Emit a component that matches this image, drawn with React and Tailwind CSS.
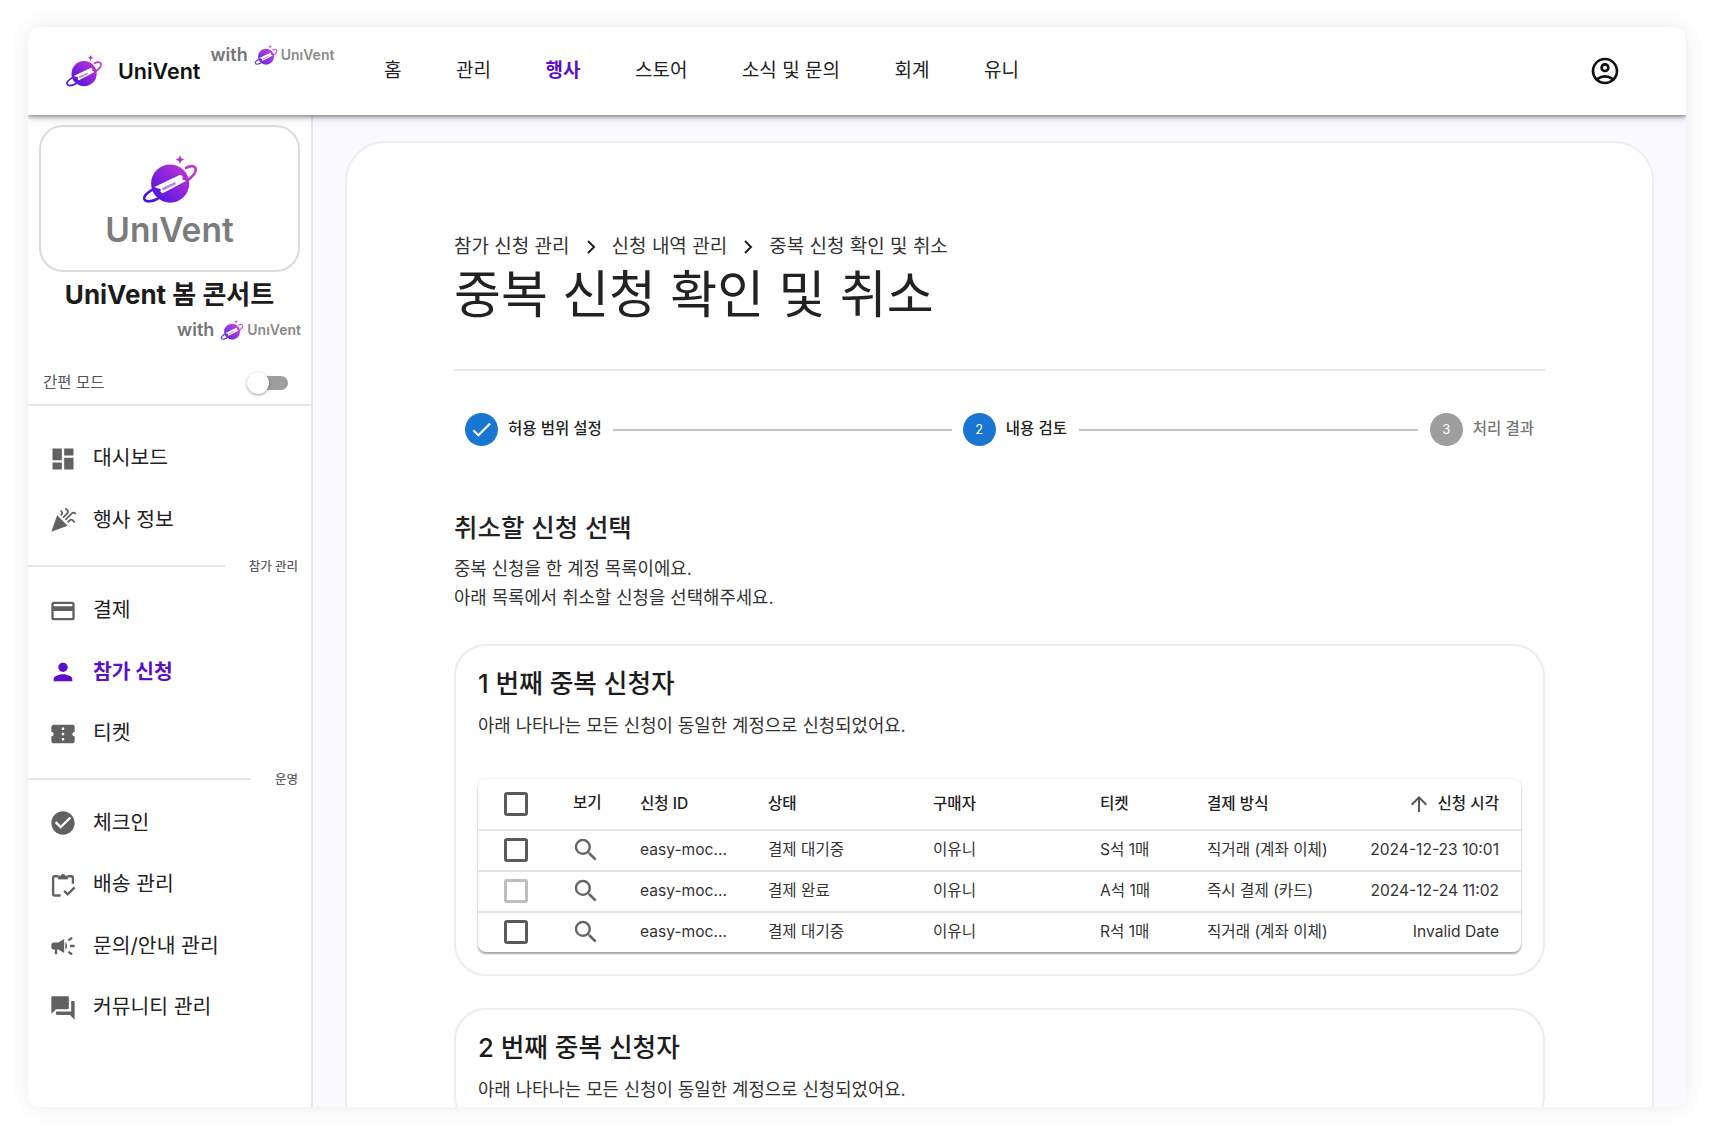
import React, { useId } from "react";
import {
  MdDashboard,
  MdCelebration,
  MdOutlineCreditCard,
  MdPerson,
  MdConfirmationNumber,
  MdCheckCircle,
  MdCampaign,
  MdForum,
  MdOutlineAccountCircle,
  MdSearch,
  MdArrowUpward,
  MdCheck,
} from "react-icons/md";

const topMenus = ["홈", "관리", "행사", "스토어", "소식 및 문의", "회계", "유니"];

const rows = [
  { status: "결제 대기중", ticket: "S석 1매", pay: "직거래 (계좌 이체)", time: "2024-12-23 10:01" },
  { status: "결제 완료", ticket: "A석 1매", pay: "즉시 결제 (카드)", time: "2024-12-24 11:02", disabled: true },
  { status: "결제 대기중", ticket: "R석 1매", pay: "직거래 (계좌 이체)", time: "Invalid Date" },
];

const columns = "grid grid-cols-[93px_69px_128px_165px_167px_107px_140px_1fr] items-center";

// planet + ticket logo
const Logo = ({ className }) => {
  const id = useId();
  return (
    <svg viewBox="30 10 175 155" className={className}>
      <defs>
        <linearGradient id={id} x1="175" y1="45" x2="65" y2="155" gradientUnits="userSpaceOnUse">
          <stop offset="0" stopColor="#c935d2" />
          <stop offset="1" stopColor="#4a12e2" />
        </linearGradient>
      </defs>
      <path d="M148 14l4 9 9 4-9 4-4 9-4-9-9-4 9-4z" fill="#b52fd8" />
      <circle cx="118" cy="100" r="58" fill={`url(#${id})`} />
      <path d="M166 52c16-9 30-6 30 6 0 12-14 24-28 34" fill="none" stroke={`url(#${id})`} strokeWidth="8" strokeLinecap="round" />
      <path d="M64 118c-18 11-28 22-24 30 5 9 22 7 40-2" fill="none" stroke={`url(#${id})`} strokeWidth="8" strokeLinecap="round" />
      <path d="M70 110L150 72l7 8c-4 5-1 10 5 9l4 3-72 38-6-6c4-6 0-11-6-9z" fill="#fff" />
      <path d="M92 114l40-19 5 6-40 20z" fill={`url(#${id})`} opacity="0.55" />
    </svg>
  );
};

const WithBadge = ({ className }) => (
  <div className={`flex items-center text-[#757575] ${className}`}>
    <span className="text-[18px] font-semibold leading-6">with</span>
    <Logo className="ml-[6px] w-[24px] h-[22px] opacity-90" />
    <span className="ml-[3px] text-[14px] font-semibold leading-6 text-[#8a8a8a]">UnıVent</span>
  </div>
);

const ClipboardCheck = ({ className }) => (
  <svg viewBox="0 0 24 24" fill="none" stroke="currentColor" strokeWidth="2" className={className}>
    <path d="M10 21H5a1.5 1.5 0 0 1-1.5-1.5V6A1.5 1.5 0 0 1 5 4.500h3" />
    <path d="M16 4.500h3A1.500 1.500 0 0 1 20.500 6v5" />
    <path d="M8 7V4.500h2a2 2 0 0 1 4 0h2V7z" fill="currentColor" stroke="none" />
    <path d="M8 4h8v3H8z" fill="currentColor" stroke="none" />
    <path d="M13 17l3 3 6-6" />
  </svg>
);

const NavItem = ({ icon: Icon, label, active }) => (
  <div className="flex items-center h-[61.5px] pl-[21px]">
    <Icon className={`w-[28px] h-[28px] shrink-0 ${active ? "text-[#5b0fc8]" : "text-[#616161]"}`} />
    <span className={`ml-[16px] text-[20.4px] ${active ? "font-bold text-[#5b0fc8]" : "text-[#212121]"}`}>{label}</span>
  </div>
);

const NavDivider = ({ label, height }) => (
  <div className={`flex items-center gap-[24px] pr-[13px] ${height}`}>
    <div className="flex-1 h-[2px] bg-[#e6e6e6]" />
    <span className="mt-[3px] text-[12.5px] font-medium text-[#616161]">{label}</span>
  </div>
);

const CheckBoxIcon = ({ disabled }) => (
  <span
    className={`block w-[24px] h-[24px] rounded-[3px] border-[3px] ${
      disabled ? "border-[#bdbdbd]" : "border-[#5a5a5a]"
    }`}
  />
);

const Step = ({ icon, label, color, textColor }) => (
  <div className="flex items-center shrink-0">
    <div className={`w-[33px] h-[33px] rounded-full flex items-center justify-center text-white text-[13px] ${color}`}>
      {icon}
    </div>
    <span className={`ml-[10px] -mt-[2px] text-[15.5px] font-medium ${textColor}`}>{label}</span>
  </div>
);

const DuplicateCard = ({ index, table }) => (
  <section className="border-2 border-[#ececf2] rounded-[32px] px-[22px] pt-[20px] pb-[22px] mb-[32px] bg-white">
    <h3 className="text-[25.7px] font-medium leading-[36px] text-[#1c1c1c]">{index} 번째 중복 신청자</h3>
    <p className="mt-[10px] text-[17.8px] leading-[28px] text-[#333]">
      아래 나타나는 모든 신청이 동일한 계정으로 신청되었어요.
    </p>
    {table && (
      <div className="mt-[39px] rounded-[8px] bg-white shadow-[0_2px_2px_rgba(0,0,0,0.35),0_0_3px_rgba(0,0,0,0.08)] text-[15.6px] text-[#333]">
        <div className={`${columns} h-[52px] border-b-2 border-[#e4e4e4] font-medium text-[#222]`}>
          <div className="pl-[26px]">
            <CheckBoxIcon />
          </div>
          <div className="-mt-[3px] pl-[2px]">보기</div>
          <div>신청 ID</div>
          <div>상태</div>
          <div>구매자</div>
          <div>티켓</div>
          <div>결제 방식</div>
          <div className="flex items-center justify-end pr-[22px]">
            <MdArrowUpward className="w-[24px] h-[24px] mr-[6px] text-[#555]" />
            신청 시각
          </div>
        </div>
        {rows.map((row, i) => (
          <div
            key={i}
            className={`${columns} pb-[2px] ${i < rows.length - 1 ? "h-[41px] border-b-2 border-[#e4e4e4]" : "h-[39px]"}`}
          >
            <div className="pl-[26px]">
              <CheckBoxIcon disabled={row.disabled} />
            </div>
            <MdSearch className="w-[30px] h-[30px] text-[#666]" />
            <div>easy-moc...</div>
            <div>{row.status}</div>
            <div>이유니</div>
            <div>{row.ticket}</div>
            <div>{row.pay}</div>
            <div className="text-right pr-[22px]">{row.time}</div>
          </div>
        ))}
      </div>
    )}
  </section>
);

export default function App() {
  return (
    <div className="h-[1134px] bg-white pl-[28px] pr-[27px] pt-[27px] pb-[27px] font-[Inter,'Noto_Sans_CJK_KR',sans-serif]">
      <div className="h-full flex flex-col rounded-[12px] overflow-hidden bg-white shadow-[0_0_22px_rgba(0,0,0,0.09)]">
        {/* top bar */}
        <header className="relative z-10 h-[88px] shrink-0 flex items-center bg-white shadow-[0_2px_4px_rgba(0,0,0,0.4),0_4px_10px_rgba(0,0,0,0.1)]">
          <div className="flex items-center pl-[37px] w-[356px] shrink-0">
            <Logo className="w-[38px] h-[34px] shrink-0" />
            <span className="ml-[15px] text-[21.5px] font-semibold text-[#111]">UniVent</span>
            <WithBadge className="ml-[10px] -mt-[33px]" />
          </div>
          <nav className="flex items-center text-[19px] text-[#222]">
            {topMenus.map((menu) => (
              <span
                key={menu}
                className={`mr-[54.5px] ${menu === "행사" ? "font-bold text-[#5b0fc8]" : ""}`}
              >
                {menu}
              </span>
            ))}
          </nav>
          <MdOutlineAccountCircle className="ml-auto mr-[65px] w-[32px] h-[32px] text-[#111]" />
        </header>

        <div className="flex flex-1 min-h-0">
          {/* sidebar */}
          <aside className="w-[285px] shrink-0 border-r-2 border-[#e6e6ea] bg-white">
            <div className="mx-[11px] mt-[10px] h-[147px] rounded-[24px] border-2 border-[#dcdcdc] flex flex-col items-center pt-[27px]">
              <Logo className="w-[58px] h-[51px]" />
              <span className="mt-[7px] text-[33.5px] leading-[36px] font-semibold text-[#7c7c7c]">UnıVent</span>
            </div>
            <h2 className="mt-[8px] text-center text-[26px] font-bold leading-[30px] text-[#1c1c1c]">
              UniVent 봄 콘서트
            </h2>
            <WithBadge className="mt-[8px] justify-end pr-[10px]" />
            <div className="mt-[28px] flex items-center justify-between h-[26px] pl-[15px] pr-[23px]">
              <span className="text-[15.5px] text-[#555]">간편 모드</span>
              <div className="relative w-[40px] h-[14px] rounded-full bg-[#9e9e9e]">
                <span className="absolute -left-[1px] -top-[4px] w-[22px] h-[22px] rounded-full bg-white shadow-[0_1px_3px_rgba(0,0,0,0.4)]" />
              </div>
            </div>
            <div className="mt-[8px] h-[2px] bg-[#e6e6e6]" />
            <div className="pt-[22px]">
              <NavItem icon={MdDashboard} label="대시보드" />
              <NavItem icon={MdCelebration} label="행사 정보" />
              <NavDivider label="참가 관리" height="h-[29px]" />
              <NavItem icon={MdOutlineCreditCard} label="결제" />
              <NavItem icon={MdPerson} label="참가 신청" active />
              <NavItem icon={MdConfirmationNumber} label="티켓" />
              <NavDivider label="운영" height="h-[28px]" />
              <NavItem icon={MdCheckCircle} label="체크인" />
              <NavItem icon={ClipboardCheck} label="배송 관리" />
              <NavItem icon={MdCampaign} label="문의/안내 관리" />
              <NavItem icon={MdForum} label="커뮤니티 관리" />
            </div>
          </aside>

          {/* content */}
          <main className="flex-1 min-w-0 overflow-hidden bg-[#faf9ff] pl-[32px] pr-[32px] pt-[26px]">
            <div className="h-[1200px] bg-white border-2 border-[#eeedf5] rounded-[40px] px-[107px] pt-[90px]">
              <div className="flex items-center h-[28px] text-[19px] text-[#333]">
                <span>참가 신청 관리</span>
                <svg viewBox="0 0 12 16" className="w-[12px] h-[16px] mx-[15px]" fill="none" stroke="#222" strokeWidth="2">
                  <path d="M3 2l6 6-6 6" />
                </svg>
                <span>신청 내역 관리</span>
                <svg viewBox="0 0 12 16" className="w-[12px] h-[16px] mx-[15px]" fill="none" stroke="#222" strokeWidth="2">
                  <path d="M3 2l6 6-6 6" />
                </svg>
                <span>중복 신청 확인 및 취소</span>
              </div>
              <h1 className="mt-[4px] text-[51px] leading-[60px] text-[#222]">중복 신청 확인 및 취소</h1>
              <div className="mt-[44px] h-[2px] bg-[#e8e8e8]" />

              <div className="mt-[42px] flex items-center px-[11px]">
                <Step
                  icon={<MdCheck className="w-[25px] h-[25px]" />}
                  label="허용 범위 설정"
                  color="bg-[#1976d2]"
                  textColor="text-[#222]"
                />
                <div className="flex-1 h-[2px] mx-[11px] bg-[#c4c4c4]" />
                <Step icon="2" label="내용 검토" color="bg-[#1976d2]" textColor="text-[#222]" />
                <div className="flex-1 h-[2px] mx-[12px] bg-[#c4c4c4]" />
                <Step icon="3" label="처리 결과" color="bg-[#9e9e9e]" textColor="text-[#777]" />
              </div>

              <h2 className="mt-[64px] text-[25.5px] font-medium leading-[36px] text-[#222]">취소할 신청 선택</h2>
              <p className="mt-[8px] text-[17.8px] leading-[29px] text-[#333]">
                중복 신청을 한 계정 목록이에요.
                <br />
                아래 목록에서 취소할 신청을 선택해주세요.
              </p>

              <div className="mt-[32px]">
                <DuplicateCard index={1} table />
                <DuplicateCard index={2} />
              </div>
            </div>
          </main>
        </div>
      </div>
    </div>
  );
}
